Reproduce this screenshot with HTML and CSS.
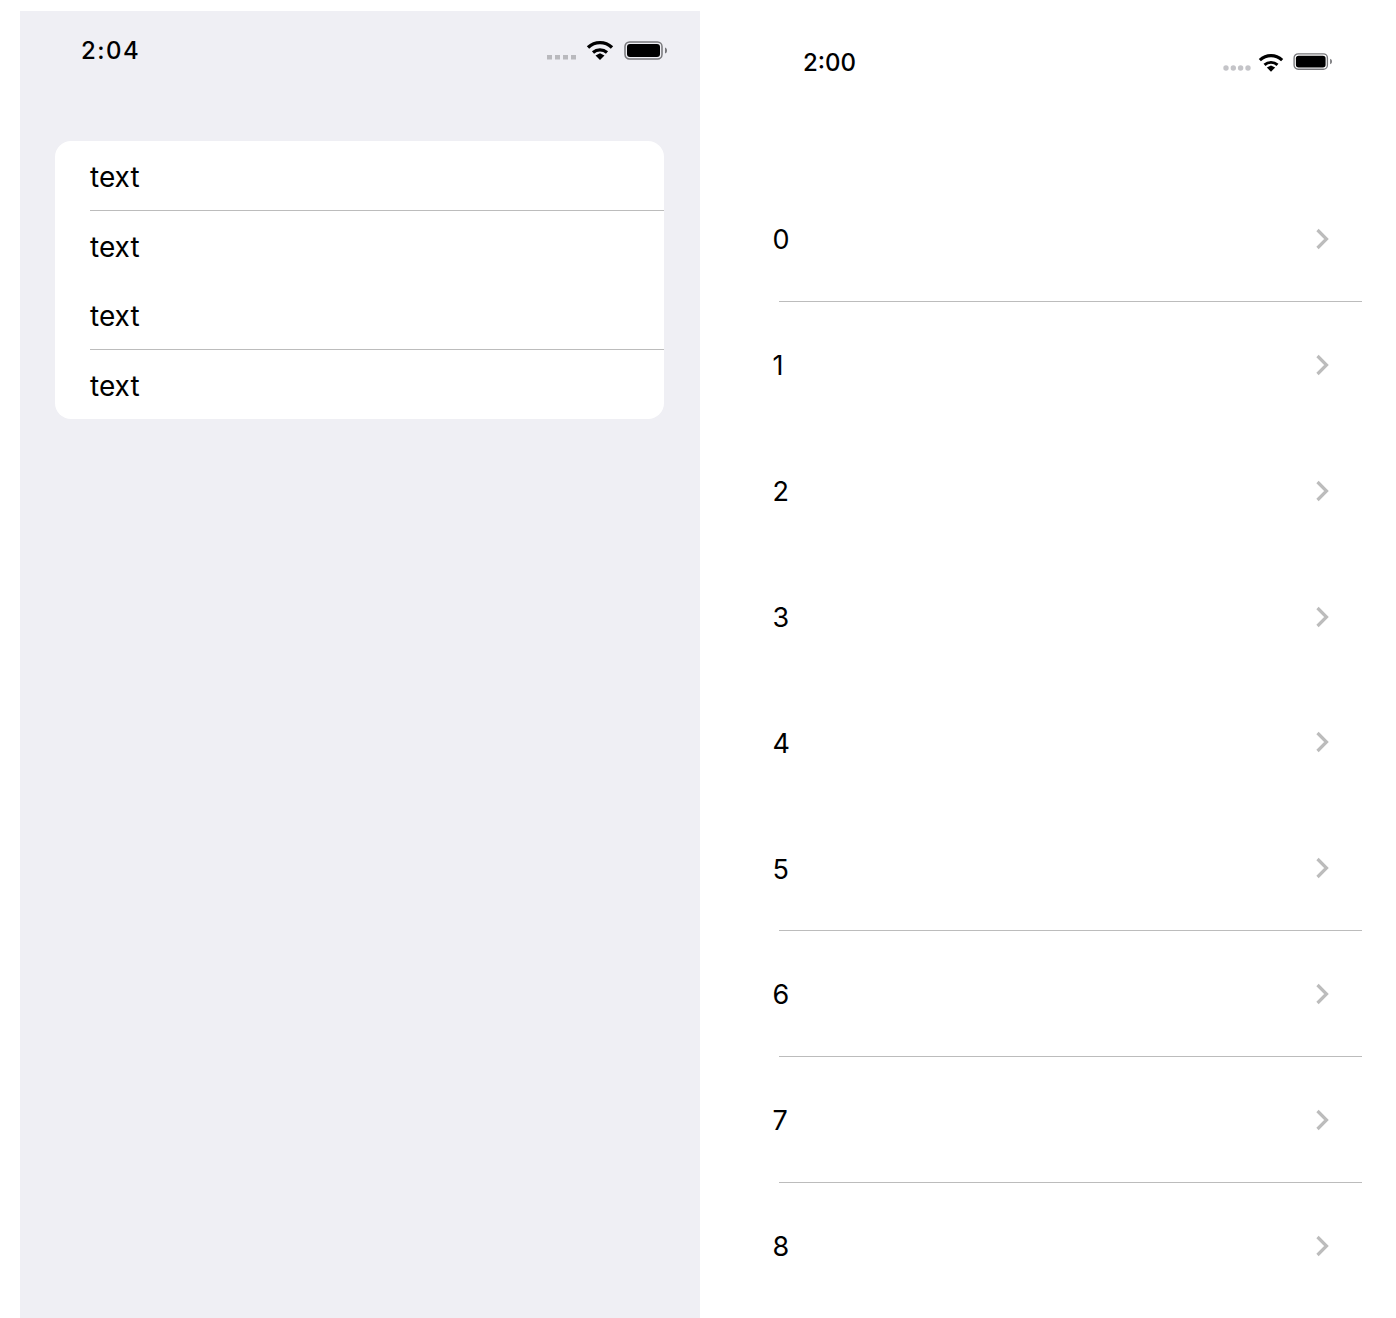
FILE: index.html
```html
<!DOCTYPE html>
<html lang="en">
<head>
<meta charset="utf-8">
<title>Lists</title>
<link rel="stylesheet" href="styles.css">
</head>
<body>
<main class="page">
  <section class="phone phone-grouped">
    <header class="status status-left">
      <span class="time">2:04</span>
      <div class="status-icons">
        <svg class="signal" width="30" height="5" viewBox="0 0 30 5"><g fill="#b9b9bd"><rect x="0" y="0" width="5" height="4.500"/><rect x="8" y="0" width="5" height="4.500"/><rect x="16" y="0" width="5" height="4.500"/><rect x="24" y="0" width="5" height="4.500"/></g></svg>
        <svg class="wifi" width="28" height="20" viewBox="0 0 28 20"><path d="M2 7.500C9 1 19 1 26 7.500" fill="none" stroke="#000" stroke-width="3.400"/><path d="M7 12.500C11 9 17 9 21 12.500" fill="none" stroke="#000" stroke-width="3.200"/><path d="M9.500 15.500L14 13.200L18.500 15.500L14 20Z" fill="#000"/></svg>
        <svg class="battery" width="44" height="20" viewBox="0 0 44 20"><rect x="1" y="1" width="37" height="17" rx="4.500" fill="none" stroke="#77777a" stroke-width="1.500"/><rect x="3" y="3" width="33" height="13" rx="3" fill="#000"/><path d="M41 6.500c1.500.5 2 1.500 2 3s-.5 2.500-2 3z" fill="#77777a"/></svg>
      </div>
    </header>
    <div class="card">
      <div class="card-row">text</div>
      <div class="card-row">text</div>
      <div class="card-row">text</div>
      <div class="card-row">text</div>
    </div>
  </section>
  <section class="phone phone-plain">
    <header class="status status-right">
      <span class="time">2:00</span>
      <div class="status-icons">
        <svg class="signal" width="28" height="6" viewBox="0 0 28 6"><g fill="#c4c4c8"><circle cx="3" cy="3" r="2.700"/><circle cx="10.300" cy="3" r="2.700"/><circle cx="17.600" cy="3" r="2.700"/><circle cx="25" cy="3" r="2.700"/></g></svg>
        <svg class="wifi" width="26" height="19" viewBox="0 0 28 20"><path d="M2 7.500C9 1 19 1 26 7.500" fill="none" stroke="#000" stroke-width="3.400"/><path d="M7 12.500C11 9 17 9 21 12.500" fill="none" stroke="#000" stroke-width="3.200"/><path d="M9.500 15.500L14 13.200L18.500 15.500L14 20Z" fill="#000"/></svg>
        <svg class="battery" width="40" height="18" viewBox="0 0 44 20"><rect x="1" y="1" width="37" height="17" rx="4.500" fill="none" stroke="#77777a" stroke-width="1.500"/><rect x="3" y="3" width="33" height="13" rx="3" fill="#000"/><path d="M41 6.500c1.500.5 2 1.500 2 3s-.5 2.500-2 3z" fill="#77777a"/></svg>
      </div>
    </header>
    <ul class="list">
      <li class="list-row line"><span class="num">0</span><svg class="chev" width="14" height="22" viewBox="0 0 14 22"><path d="M2.500 2L11.500 11L2.500 20" fill="none" stroke="#bcbcbc" stroke-width="3.200"/></svg></li>
      <li class="list-row"><span class="num">1</span><svg class="chev" width="14" height="22" viewBox="0 0 14 22"><path d="M2.500 2L11.500 11L2.500 20" fill="none" stroke="#bcbcbc" stroke-width="3.200"/></svg></li>
      <li class="list-row"><span class="num">2</span><svg class="chev" width="14" height="22" viewBox="0 0 14 22"><path d="M2.500 2L11.500 11L2.500 20" fill="none" stroke="#bcbcbc" stroke-width="3.200"/></svg></li>
      <li class="list-row"><span class="num">3</span><svg class="chev" width="14" height="22" viewBox="0 0 14 22"><path d="M2.500 2L11.500 11L2.500 20" fill="none" stroke="#bcbcbc" stroke-width="3.200"/></svg></li>
      <li class="list-row"><span class="num">4</span><svg class="chev" width="14" height="22" viewBox="0 0 14 22"><path d="M2.500 2L11.500 11L2.500 20" fill="none" stroke="#bcbcbc" stroke-width="3.200"/></svg></li>
      <li class="list-row line"><span class="num">5</span><svg class="chev" width="14" height="22" viewBox="0 0 14 22"><path d="M2.500 2L11.500 11L2.500 20" fill="none" stroke="#bcbcbc" stroke-width="3.200"/></svg></li>
      <li class="list-row line"><span class="num">6</span><svg class="chev" width="14" height="22" viewBox="0 0 14 22"><path d="M2.500 2L11.500 11L2.500 20" fill="none" stroke="#bcbcbc" stroke-width="3.200"/></svg></li>
      <li class="list-row line"><span class="num">7</span><svg class="chev" width="14" height="22" viewBox="0 0 14 22"><path d="M2.500 2L11.500 11L2.500 20" fill="none" stroke="#bcbcbc" stroke-width="3.200"/></svg></li>
      <li class="list-row"><span class="num">8</span><svg class="chev" width="14" height="22" viewBox="0 0 14 22"><path d="M2.500 2L11.500 11L2.500 20" fill="none" stroke="#bcbcbc" stroke-width="3.200"/></svg></li>
    </ul>
  </section>
</main>
</body>
</html>
```
FILE: styles.css
```css
* { box-sizing: border-box; }
html, body { margin: 0; padding: 0; background: #fff; }
body { font-family: Inter, "Liberation Sans", sans-serif; color: #000; }
.page { display: flex; height: 1318px; padding: 11px 34px 0 20px; overflow: hidden; }
.phone { display: flex; flex-direction: column; }
.phone-grouped { width: 680px; background: #efeff4; }
.phone-plain { flex: 1; }
.status { display: flex; align-items: center; justify-content: space-between; }
.status-icons { display: flex; align-items: center; }
.time { font-weight: 500; }
.status-left { height: 78px; padding: 0 32px 0 61px; }
.status-left .time { font-size: 24px; letter-spacing: 1.500px; }
.status-left .status-icons { gap: 9px; }
.status-left .signal { margin-top: 14px; }
.status-left .battery { margin: 1px 0 0 1px; }
.status-right { height: 102px; padding: 0 29px 0 103px; }
.status-right .time { font-size: 24px; }
.status-right .status-icons { gap: 8px; }
.status-right .signal { margin: 12px -1px 0 0; }
.status-right .battery { margin-left: 1px; }
.card { margin: 52px 36px 0 35px; background: #fff; border-radius: 16px; overflow: hidden; padding-left: 35px; }
.card-row { height: 69.500px; display: flex; align-items: center; padding-top: 2.500px; font-size: 28px; }
.card-row:nth-child(odd) { border-bottom: 1px solid #bcbcbc; }
.list { list-style: none; margin: 63px 0 0; padding: 0; }
.list-row { position: relative; height: 125.875px; display: flex; align-items: center; justify-content: space-between; padding: 0 33px 0 72.500px; font-size: 27px; }
.num { padding-top: 1.500px; }
.line::after { content: ""; position: absolute; left: 79px; right: 0; bottom: 0; height: 1px; background: #bcbcbc; }
```
